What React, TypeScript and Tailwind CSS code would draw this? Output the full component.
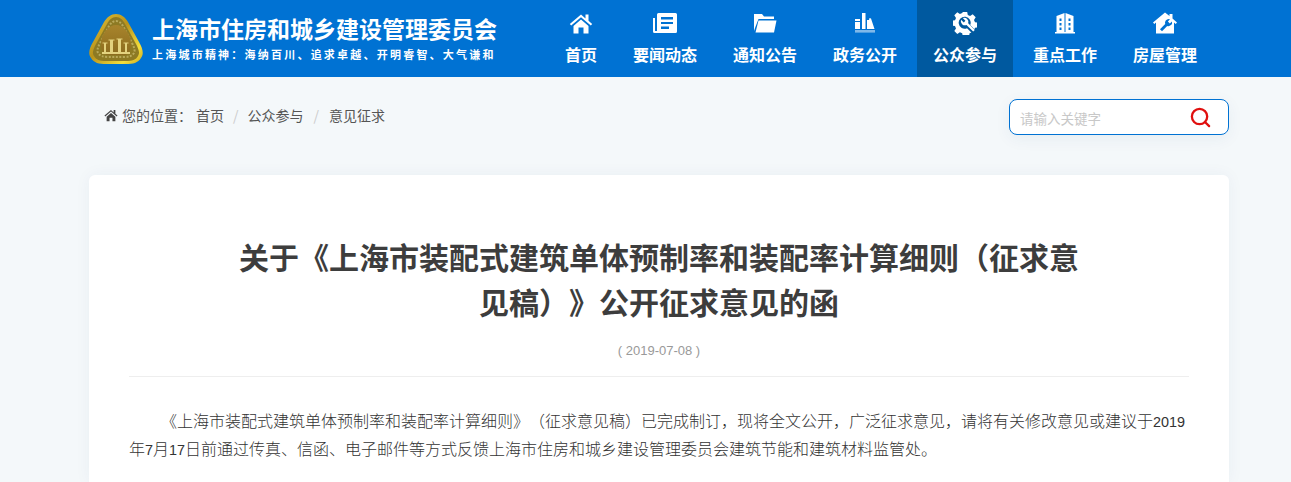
import { Search } from "lucide-react";
import type { ReactNode } from "react";

const cjk = "font-['Microsoft_YaHei','Noto_Sans_CJK_SC','Noto_Sans',sans-serif] [text-spacing-trim:space-all]";

function Logo() {
  return (
    <svg viewBox="0 0 54 52" className="h-[52px] w-[54px] shrink-0">
      <defs>
        <linearGradient id="gold" x1="0" y1="0" x2="1" y2="1">
          <stop offset="0" stopColor="#e3c53a" />
          <stop offset="0.45" stopColor="#b8921b" />
          <stop offset="0.8" stopColor="#f4de3c" />
          <stop offset="1" stopColor="#c9a520" />
        </linearGradient>
        <linearGradient id="core" x1="0" y1="0" x2="0" y2="1">
          <stop offset="0" stopColor="#a8842c" />
          <stop offset="1" stopColor="#8c6c1e" />
        </linearGradient>
      </defs>
      <path d="M27 1c5 0 9 3 12 8l11 20c4 7 5 12 2 16-3 5-8 6-15 6H17c-7 0-12-1-15-6-3-4-2-9 2-16L15 9c3-5 7-8 12-8z" fill="url(#gold)" />
      <path d="M27 4c4 0 7 3 9 7l11 20c3 6 4 9 2 12-2 4-6 5-12 5H17c-6 0-10-1-12-5-2-3-1-6 2-12l11-20c2-4 5-7 9-7z" fill="#8d7a24" />
      <path d="M27 8c3 0 5 2 7 5l9 17c3 6 3 8 2 10-2 3-5 4-10 4H19c-5 0-8-1-10-4-1-2-1-4 2-10l9-17c2-3 4-5 7-5z" fill="none" stroke="#b9a95a" strokeWidth="2" strokeDasharray="2 1.500" />
      <path d="M27 12c7 0 15 8 15 19 0 5-2 10-6 11H18c-4-1-6-6-6-11 0-11 8-19 15-19z" fill="url(#core)" />
      <path d="M13 41h28v-2H13zM15 39h2v-9h-2zM21 39h3V27h-3zM29 39h3V26h-3zM36 39h2v-9h-2z" fill="#e3d27e" />
      <path d="M13.500 30h5M19.500 27h6M27.500 26h6M34.500 30h5" stroke="#e3d27e" strokeWidth="1.200" />
    </svg>
  );
}

const HomeIcon = ({ className }: { className: string }) => (
  <svg viewBox="0 0 24 24" className={className} fill="currentColor">
    <path d="M12 3.500.8 13l1.400 1.600L12 6.200l9.800 8.400 1.400-1.600-3.700-3.200V3.500h-3v4z" />
    <path d="M4.500 15 12 8.500l7.500 6.500v7.500h-5v-6h-5v6h-5z" />
  </svg>
);

const icons: ReactNode[] = [
  <HomeIcon className="h-6 w-6" />,
  <svg viewBox="0 0 24 24" className="h-6 w-6" fill="currentColor">
    <path fillRule="evenodd" d="M5.500 2H22.500A1.500 1.500 0 0 1 24 3.500v17a1.500 1.500 0 0 1-1.500 1.500H1.500A1.500 1.500 0 0 1 0 20.500V7h2v13h2V3.500A1.500 1.500 0 0 1 5.500 2zM8 6v2.500h12V6zm0 5v2h12v-2zm0 4.500V18h8v-2.500z" />
  </svg>,
  <svg viewBox="0 0 24 24" className="h-6 w-6" fill="currentColor">
    <path d="M1 3h8l2 2.500h10V8H5.500L2 17l-1 3z" />
    <path d="M5.500 9.500H23.500L21 21.500H2.500z" />
  </svg>,
  <svg viewBox="0 0 24 24" className="h-6 w-6" fill="currentColor">
    <path d="M2 8h5v2H2zM2 11h5v7H2zM9 2h3.500v16H9zM14 9h2l.5-2 1.500.5 3.500 10.500H14z" />
    <path d="M2 19.500h20v1H2z" />
    <path d="M2 21.500h20V22H2z" opacity="0.6" />
  </svg>,
  <svg viewBox="0 0 24 24" className="h-6 w-6" fill="currentColor">
    <path fillRule="evenodd" d="M9.800 1h4.400l.6 3 2.300 1 2.600-1.700 3 3-1.700 2.600 1 2.300 3 .6v4.400l-3 .6-.6 1.400-4.200-4.200a6 6 0 1 0-3.200 3.200l4.400 4.400-1.800.7-.6 3H9.800l-.6-3-2.300-1-2.600 1.700-3-3 1.700-2.600-1-2.300-3-.6V9.800l3-.6 1-2.300-1.700-2.600 3-3 2.600 1.700 2.300-1z" />
    <path d="M8 8.800l2.800 2.600 1.600-1.600-2.600-2.800a4.200 4.200 0 0 1 5.400 5.300l6.600 6.600-1.600 1.700-6.700-6.600A4.200 4.200 0 0 1 8 8.800z" />
  </svg>,
  <svg viewBox="0 0 24 24" className="h-6 w-6" fill="currentColor">
    <path fillRule="evenodd" d="M3.500 5 11.500 2v19h1V2l8 3v16H22v1.500H2V21h1.500zM6.500 7.500V10h2V7.500zm0 4.500v2.500h2V12zm0 4.500V19h2v-2.500zm9-9V10h2V7.500zm0 4.500v2.500h2V12zm0 4.500V19h2v-2.500z" />
  </svg>,
  <svg viewBox="0 0 24 24" className="h-6 w-6" fill="currentColor">
    <path fillRule="evenodd" d="M12 1.500 16.500 5V3h3v4.600L24 11.500l-1.300 1.500-1.700-1.400V22.500H3V11.600L1.300 13 0 11.500zM15.800 8a3.800 3.800 0 0 0-3.600 5L7 18.200 9 20.200l5.200-5.200a3.800 3.800 0 0 0 4.800-4.600L16.800 12.500l-1.900-1.900 2.100-2.300a3.800 3.800 0 0 0-1.200-.3z" />
  </svg>,
];

const navItems = ["首页", "要闻动态", "通知公告", "政务公开", "公众参与", "重点工作", "房屋管理"];

function Num({ children }: { children: ReactNode }) {
  return <span className="font-['Liberation_Sans',sans-serif] text-[14.4px] leading-none">{children}</span>;
}

export default function App() {
  return (
    <div className={`flex h-screen flex-col overflow-hidden bg-[#f4f8fa] ${cjk}`}>
      <header className="h-[77px] shrink-0 bg-[#0072d3]">
        <div className="ml-[89px] flex h-full w-[1140px] items-center justify-between pr-[16px]">
          <div className="flex items-center">
            <Logo />
            <div className="ml-[9px] text-white">
              <h1 className="text-[23px] leading-[30px] font-bold">上海市住房和城乡建设管理委员会</h1>
              <p className="mt-[1px] text-[11px] leading-[20px] font-bold tracking-[2.22px] whitespace-nowrap">上海城市精神：海纳百川、追求卓越、开明睿智、大气谦和</p>
            </div>
          </div>
          <nav className="flex h-full gap-[4px]">
            {navItems.map((item, index) => (
              <a key={item} className={`flex h-full flex-col items-center px-4 pt-[11px] text-white ${index === 4 ? "bg-[#00599f]" : ""}`}>
                {icons[index]}
                <span className="mt-[7px] text-base leading-[24px] font-bold">{item}</span>
              </a>
            ))}
          </nav>
        </div>
      </header>

      <div className="ml-[89px] flex w-[1140px] shrink-0 items-center justify-between pt-[22px] pl-[15px]">
        <div className="-mt-[4px] flex items-center text-sm text-[#555]">
          <HomeIcon className="mr-[4px] h-[14px] w-[14px] text-[#444]" />
          <span>您的位置：</span>
          <a className="ml-[4px]">首页</a>
          <span className="mx-[9px] text-[#ccc]">/</span>
          <a>公众参与</a>
          <span className="mx-[10px] text-[#ccc]">/</span>
          <span>意见征求</span>
        </div>
        <div className="flex h-9 w-[220px] items-center rounded-lg border border-[#0072d3] bg-white pr-[16px] pl-[10px] shadow-[0_4px_16px_rgba(0,60,120,0.06)]">
          <input placeholder="请输入关键字" className="min-w-0 flex-1 pt-[2px] text-[13.5px] outline-none placeholder:text-[#c8c8c8]" />
          <Search className="h-[23px] w-[23px] text-[#e0100f]" strokeWidth={2.4} />
        </div>
      </div>

      <main className="mt-10 ml-[89px] w-[1140px] flex-1 rounded-t-md bg-white px-10 pt-[59px] shadow-[0_0_16px_rgba(0,60,120,0.05)]">
        <h2 className="mx-auto w-[860px] text-center text-[30px] leading-[45px] font-bold text-[#3d3d3d]">关于《上海市装配式建筑单体预制率和装配率计算细则（征求意见稿）》公开征求意见的函</h2>
        <p className="mt-[16px] pb-[14px] text-center font-['Liberation_Sans',sans-serif] text-[13px] leading-[22px] text-[#999]">( 2019-07-08 )</p>
        <div className="border-t border-[#eeeeee] pt-[29px] text-base leading-[28px] font-light text-[#333]">
          <p className="indent-8">
            《上海市装配式建筑单体预制率和装配率计算细则》（征求意见稿）已完成制订，现将全文公开，广泛征求意见，请将有关修改意见或建议于<Num>2019</Num>年<Num>7</Num>月<Num>17</Num>日前通过传真、信函、电子邮件等方式反馈上海市住房和城乡建设管理委员会建筑节能和建筑材料监管处。
          </p>
        </div>
      </main>
    </div>
  );
}
